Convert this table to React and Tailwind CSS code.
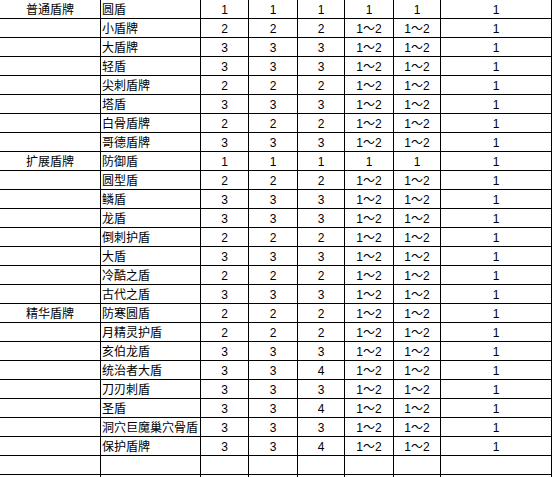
const ROWS = [
  ["普通盾牌", "圆盾", "1", "1", "1", "1", "1", "1"],
  ["", "小盾牌", "2", "2", "2", "1～2", "1～2", "1"],
  ["", "大盾牌", "3", "3", "3", "1～2", "1～2", "1"],
  ["", "轻盾", "3", "3", "3", "1～2", "1～2", "1"],
  ["", "尖刺盾牌", "2", "2", "2", "1～2", "1～2", "1"],
  ["", "塔盾", "3", "3", "3", "1～2", "1～2", "1"],
  ["", "白骨盾牌", "2", "2", "2", "1～2", "1～2", "1"],
  ["", "哥德盾牌", "3", "3", "3", "1～2", "1～2", "1"],
  ["扩展盾牌", "防御盾", "1", "1", "1", "1", "1", "1"],
  ["", "圆型盾", "2", "2", "2", "1～2", "1～2", "1"],
  ["", "鳞盾", "3", "3", "3", "1～2", "1～2", "1"],
  ["", "龙盾", "3", "3", "3", "1～2", "1～2", "1"],
  ["", "倒刺护盾", "2", "2", "2", "1～2", "1～2", "1"],
  ["", "大盾", "3", "3", "3", "1～2", "1～2", "1"],
  ["", "冷酷之盾", "2", "2", "2", "1～2", "1～2", "1"],
  ["", "古代之盾", "3", "3", "3", "1～2", "1～2", "1"],
  ["精华盾牌", "防寒圆盾", "2", "2", "2", "1～2", "1～2", "1"],
  ["", "月精灵护盾", "2", "2", "2", "1～2", "1～2", "1"],
  ["", "亥伯龙盾", "3", "3", "3", "1～2", "1～2", "1"],
  ["", "统治者大盾", "3", "3", "4", "1～2", "1～2", "1"],
  ["", "刀刃刺盾", "3", "3", "3", "1～2", "1～2", "1"],
  ["", "圣盾", "3", "3", "4", "1～2", "1～2", "1"],
  ["", "洞穴巨魔巢穴骨盾", "3", "3", "3", "1～2", "1～2", "1"],
  ["", "保护盾牌", "3", "3", "4", "1～2", "1～2", "1"],
  ["", "", "", "", "", "", "", ""],
  ["", "", "", "", "", "", "", ""],
];

export default function App() {
  return (
    <div
      className="w-[552px] h-[477px] overflow-hidden bg-white text-black text-[12px]"
      style={{ fontFamily: '"Liberation Sans", "Noto Sans CJK SC", sans-serif' }}
    >
      <div className="grid grid-cols-[101px_100px_48px_49px_47px_49px_47px_111px]">
        {ROWS.map((row, r) =>
          row.map((cell, c) => (
            <div
              key={`${r}-${c}`}
              className={`h-[19px] border-r border-b border-black flex items-center pt-[2px] leading-none whitespace-nowrap overflow-hidden ${
                c === 1 ? "justify-start pl-[1px]" : "justify-center"
              }`}
            >
              {cell}
            </div>
          ))
        )}
      </div>
    </div>
  );
}
